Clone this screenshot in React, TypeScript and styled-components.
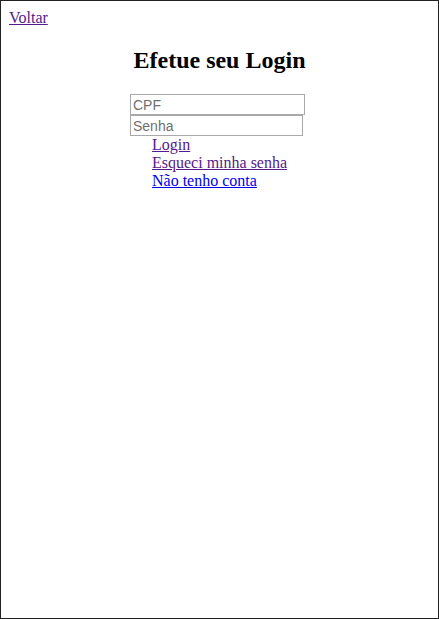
import React from 'react';
import styled, { createGlobalStyle } from 'styled-components';

const GlobalStyle = createGlobalStyle`
  html, body {
    margin: 0;
    padding: 0;
  }
  body {
    font-family: "Liberation Serif", "Times New Roman", serif;
    font-size: 16px;
    background: #fff;
  }
`;

const Page = styled.div`
  box-sizing: border-box;
  min-height: 619px;
  border: 1px solid #222;
  padding: 8px;
`;

const Link = styled.a<{ $visited?: boolean }>`
  color: ${(p) => (p.$visited ? '#551a8b' : '#0000ee')};
  text-decoration: underline;
  cursor: pointer;
`;

const Title = styled.h2`
  margin: 20px 0 20px;
  font-size: 24px;
  font-weight: bold;
  text-align: center;
  line-height: 27px;
`;

const Form = styled.form`
  width: 179px;
  margin: 0 auto;
  display: flex;
  flex-direction: column;
  align-items: flex-start;
`;

const Field = styled.input<{ $width: number }>`
  box-sizing: border-box;
  width: ${(p) => p.$width}px;
  height: 21px;
  margin: 0;
  padding: 0 2px;
  border: 1px solid #a9a9a9;
  border-radius: 0;
  font-family: "Liberation Sans", Arial, sans-serif;
  font-size: 14px;
  outline: none;

  &::placeholder {
    color: #6f6f6f;
  }
`;

const LinkList = styled.ul`
  list-style: none;
  margin: 0;
  padding: 0 0 0 22px;
  line-height: 18px;
`;

export default function App() {
  return (
    <>
      <GlobalStyle />
      <Page>
        <Link $visited href="#">Voltar</Link>
        <Title>Efetue seu Login</Title>
        <Form onSubmit={(e) => e.preventDefault()}>
          <Field $width={175} type="text" placeholder="CPF" />
          <Field $width={173} type="password" placeholder="Senha" />
          <LinkList>
            <li><Link $visited href="#">Login</Link></li>
            <li><Link $visited href="#">Esqueci minha senha</Link></li>
            <li><Link href="#">Não tenho conta</Link></li>
          </LinkList>
        </Form>
      </Page>
    </>
  );
}
